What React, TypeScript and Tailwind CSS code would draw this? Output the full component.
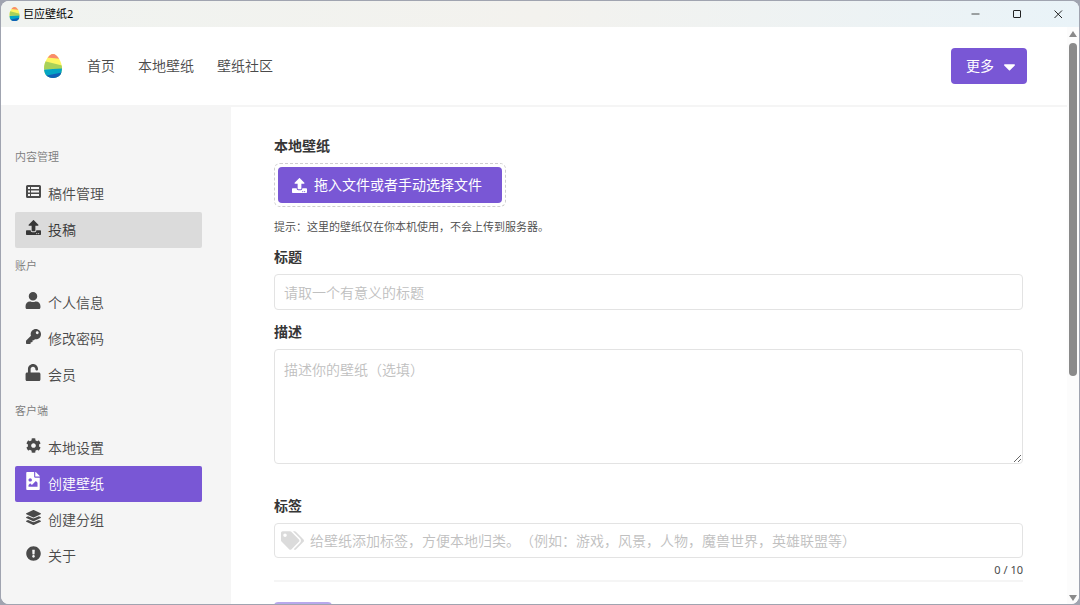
import type { ReactNode } from "react";
import {
  FaCaretDown,
  FaCog,
  FaExclamationCircle,
  FaFileImage,
  FaKey,
  FaLayerGroup,
  FaTags,
  FaUnlock,
  FaUpload,
  FaUser,
} from "react-icons/fa";

type MenuItem = {
  label: string;
  icon: ReactNode;
  state?: "hover" | "active";
};

function ListIcon() {
  return (
    <svg width="15" height="15" viewBox="0 0 15 15" fill="currentColor" aria-hidden="true">
      <path
        fillRule="evenodd"
        d="M1.500 1H13.500A1.500 1.500 0 0 1 15 2.500V12.500A1.500 1.500 0 0 1 13.500 14H1.500A1.500 1.500 0 0 1 0 12.500V2.500A1.500 1.500 0 0 1 1.500 1ZM2 3V5H4V3ZM5 3V5H13V3ZM2 6.500V8.500H4V6.500ZM5 6.500V8.500H13V6.500ZM2 10V12H4V10ZM5 10V12H13V10Z"
      />
    </svg>
  );
}

const menu: { title: string; items: MenuItem[] }[] = [
  {
    title: "内容管理",
    items: [
      { label: "稿件管理", icon: <ListIcon /> },
      { label: "投稿", icon: <FaUpload size={15} />, state: "hover" },
    ],
  },
  {
    title: "账户",
    items: [
      { label: "个人信息", icon: <FaUser size={17} /> },
      { label: "修改密码", icon: <FaKey size={15} /> },
      { label: "会员", icon: <FaUnlock size={17} /> },
    ],
  },
  {
    title: "客户端",
    items: [
      { label: "本地设置", icon: <FaCog size={15} /> },
      { label: "创建壁纸", icon: <FaFileImage size={18} />, state: "active" },
      { label: "创建分组", icon: <FaLayerGroup size={15} /> },
      { label: "关于", icon: <FaExclamationCircle size={15} /> },
    ],
  },
];

const itemStyles = {
  normal: "text-[#4a4a4a]",
  hover: "bg-[#dbdbdb] text-[#363636]",
  active: "bg-[#7957d5] text-white",
};

const labelStyle = "mb-[6px] block text-sm leading-[22px] font-bold";

const fieldStyle =
  "block w-full rounded-sm border border-[#e3e3e3] bg-white px-[9px] text-sm text-[#363636] outline-none placeholder:text-[#c0c0c0]";

function Logo({ className }: { className: string }) {
  return (
    <svg viewBox="0 0 18 24" className={className} aria-hidden="true">
      <defs>
        <clipPath id="egg">
          <path d="M9 0C13.500 0 18 8.200 18 14.500C18 20.500 14.500 24 9 24C3.500 24 0 20.500 0 14.500C0 8.200 4.500 0 9 0Z" />
        </clipPath>
      </defs>
      <g clipPath="url(#egg)">
        <path d="M0 0H18V24H0Z" fill="#fdf661" />
        <path d="M0 0H18V5L3 3.500L0 4Z" fill="#f98b6c" />
        <path d="M0 7L18 11.500V15H0Z" fill="#a9d15a" />
        <path d="M0 15.500L18 14.500V24H0Z" fill="#04a6c4" />
        <path d="M0 22L18 18.500V24H0Z" fill="#1160b7" />
      </g>
    </svg>
  );
}

function TitleBar() {
  return (
    <div className="flex h-[26px] shrink-0 items-center justify-between bg-linear-to-r from-[#f0f3f0] via-[#f3f2ee] to-[#e9f3f8] pl-2">
      <div className="flex items-center gap-[3px] text-[11px] font-normal text-black">
        <Logo className="h-[14px] w-[11px]" />
        巨应壁纸2
      </div>
      <div className="flex h-full text-[#222]">
        <button aria-label="最小化" className="flex w-[42px] items-center justify-center">
          <svg width="9" height="9" viewBox="0 0 9 9" fill="none" stroke="currentColor">
            <path d="M0.500 4H8.500" strokeWidth="0.800" />
          </svg>
        </button>
        <button aria-label="最大化" className="flex w-[42px] items-center justify-center">
          <svg width="9" height="9" viewBox="0 0 9 9" fill="none" stroke="currentColor">
            <rect x="0.500" y="0.500" width="7" height="7" rx="0.500" />
          </svg>
        </button>
        <button aria-label="关闭" className="flex w-[41px] items-center justify-center">
          <svg width="9" height="9" viewBox="0 0 9 9" fill="none" stroke="currentColor">
            <path d="M0.500 0.500L8 8M8 0.500L0.500 8" />
          </svg>
        </button>
      </div>
    </div>
  );
}

function Navbar() {
  return (
    <header className="flex h-20 shrink-0 items-center justify-between border-b-2 border-[#f5f5f5] pr-10 pl-[41px]">
      <nav className="flex items-center gap-[23px] text-sm text-[#4a4a4a]">
        <a href="#" aria-label="巨应壁纸">
          <Logo className="h-6 w-[22px]" />
        </a>
        <a href="#">首页</a>
        <a href="#">本地壁纸</a>
        <a href="#">壁纸社区</a>
      </nav>
      <button className="flex h-9 items-center gap-[6px] rounded-sm bg-[#7957d5] pr-2 pl-[15px] text-sm font-normal text-white">
        更多
        <FaCaretDown size={19} />
      </button>
    </header>
  );
}

function Sidebar() {
  return (
    <aside className="w-[230px] shrink-0 bg-[#f5f5f5] pt-8 pr-[29px] pl-[14px]">
      {menu.map((group) => (
        <section key={group.title}>
          <h2 className="flex h-[37px] items-center text-[11px] text-[#7a7a7a]">
            {group.title}
          </h2>
          <ul>
            {group.items.map((item) => (
              <li key={item.label}>
                <a
                  href="#"
                  className={`flex h-9 items-center gap-[7px] rounded-xs px-[10px] text-sm ${itemStyles[item.state ?? "normal"]}`}
                >
                  <span className="flex h-[30px] w-4 items-center justify-center self-start">
                    {item.icon}
                  </span>
                  {item.label}
                </a>
              </li>
            ))}
          </ul>
        </section>
      ))}
    </aside>
  );
}

function WallpaperForm() {
  return (
    <form className="min-w-0 flex-1 pt-7 pr-11 pl-[43px] text-[#363636]">
      <label htmlFor="upload" className={labelStyle}>
        本地壁纸
      </label>
      <div className="w-fit rounded-md border border-dashed border-[#cfcfcf] p-[3px]">
        <button
          id="upload"
          type="button"
          className="flex h-9 items-center gap-[7px] rounded-sm bg-[#7957d5] pr-5 pl-[14px] text-sm font-normal text-white"
        >
          <FaUpload size={15} />
          拖入文件或者手动选择文件
        </button>
      </div>
      <p className="mt-3 text-[11px] leading-4 text-[#4a4a4a]">
        提示：这里的壁纸仅在你本机使用，不会上传到服务器。
      </p>

      <label htmlFor="title" className={`mt-[11px] ${labelStyle}`}>
        标题
      </label>
      <input id="title" placeholder="请取一个有意义的标题" className={`h-9 ${fieldStyle}`} />

      <label htmlFor="desc" className={`mt-[11px] ${labelStyle}`}>
        描述
      </label>
      <textarea
        id="desc"
        placeholder="描述你的壁纸（选填）"
        className={`h-[115px] resize-y py-[10px] ${fieldStyle}`}
      />

      <label htmlFor="tags" className={`mt-[31px] ${labelStyle}`}>
        标签
      </label>
      <div className="flex h-[35px] items-center gap-[6px] rounded-sm border border-[#e3e3e3] px-[6px]">
        <FaTags size={23} className="shrink-0 text-[#dbdbdb]" />
        <input
          id="tags"
          placeholder="给壁纸添加标签，方便本地归类。（例如：游戏，风景，人物，魔兽世界，英雄联盟等）"
          className="min-w-0 flex-1 text-sm outline-none placeholder:text-[#c0c0c0]"
        />
      </div>
      <p className="mt-1 text-right text-[11px] leading-4 font-normal text-[#4a4a4a]">0 / 10</p>
      <hr className="mt-[2px] border-t-2 border-[#f5f5f5]" />
      <button
        type="button"
        aria-label="创建"
        className="mt-5 h-9 w-[58px] rounded-sm bg-[#b8a8ec]"
      />
    </form>
  );
}

function ScrollBar() {
  return (
    <div className="flex w-3 shrink-0 flex-col items-center bg-[#fcfcfc] pt-1 pb-[3px]" aria-hidden="true">
      <svg width="8" height="6" viewBox="0 0 8 6" fill="#8a8a8a">
        <path d="M4 0L8 6H0Z" />
      </svg>
      <div className="my-[6px] min-h-0 flex-1">
        <div className="h-[61%] w-2 rounded-full bg-[#8a8a8a]" />
      </div>
      <svg width="8" height="6" viewBox="0 0 8 6" fill="#8a8a8a">
        <path d="M0 0H8L4 6Z" />
      </svg>
    </div>
  );
}

export default function App() {
  return (
    <div className="h-screen bg-[#a0a4b0] p-px font-['Noto_Sans','Noto_Sans_CJK_SC',sans-serif] font-[350] [text-spacing-trim:space-all]">
      <div className="flex h-full flex-col overflow-hidden rounded-lg bg-white">
        <TitleBar />
        <div className="flex min-h-0 flex-1">
          <div className="flex min-w-0 flex-1 flex-col overflow-hidden">
            <Navbar />
            <div className="flex min-h-0 flex-1 overflow-hidden">
              <Sidebar />
              <WallpaperForm />
            </div>
          </div>
          <ScrollBar />
        </div>
      </div>
    </div>
  );
}
